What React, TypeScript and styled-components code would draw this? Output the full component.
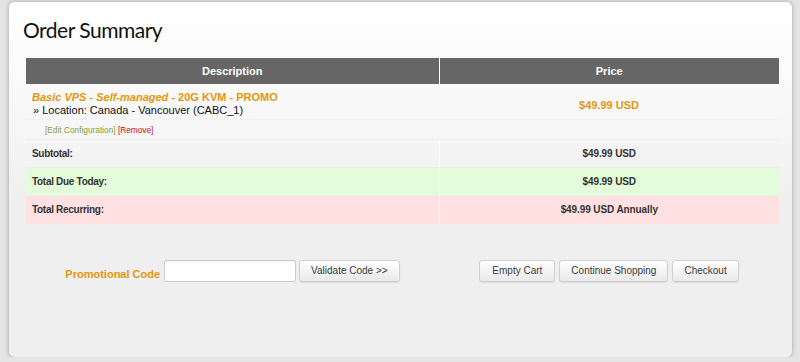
import React from "react";
import styled, { createGlobalStyle } from "styled-components";

const GlobalStyle = createGlobalStyle`
  html, body {
    margin: 0;
    padding: 0;
    background: #e4e4e4;
    font-family: "Liberation Sans", Arial, sans-serif;
  }
`;

const Panel = styled.div`
  box-sizing: border-box;
  width: 783px;
  height: 355px;
  margin: 2px 0 0 9px;
  padding: 15px 13px 0 17px;
  border-radius: 6px;
  background: linear-gradient(#ffffff 0px, #f7f7f7 120px, #efefef 200px);
  box-shadow: 0 0 5px rgba(0, 0, 0, 0.3);
`;

const Title = styled.h1`
  margin: 0 0 15px -3px;
  font-family: Lato, "Open Sans", sans-serif;
  font-weight: 400;
  font-size: 21px;
  letter-spacing: -0.5px;
  line-height: 26px;
  color: #111;
`;

const Table = styled.table`
  width: 753px;
  border-collapse: collapse;
  color: #333;
`;

const Head = styled.th<{ $split?: boolean }>`
  height: 26px;
  padding: 0;
  background: #666;
  color: #fff;
  font-size: 11px;
  font-weight: bold;
  text-align: center;
  border-left: ${(p) => (p.$split ? "1px solid #fff" : "none")};
`;

const Cell = styled.td<{ $bg?: string; $center?: boolean }>`
  box-sizing: border-box;
  padding: 0 6px;
  height: 28px;
  background: ${(p) => p.$bg || "transparent"};
  text-align: ${(p) => (p.$center ? "center" : "left")};
  font-size: 10px;
  font-weight: bold;
  letter-spacing: ${(p) => (p.$center ? "-0.1px" : "-0.3px")};
  border-left: ${(p) => (p.$center ? "1px solid rgba(255,255,255,0.6)" : "none")};
  border-top: 1px solid #ececec;
`;

const ProductCell = styled.td<{ $center?: boolean }>`
  padding: 7px 6px 2px;
  vertical-align: ${(p) => (p.$center ? "middle" : "top")};
  text-align: ${(p) => (p.$center ? "center" : "left")};
`;

const ProductName = styled.div`
  color: #e3960d;
  font-size: 11px;
  font-weight: bold;
  line-height: 13px;
  em {
    font-style: italic;
  }
`;

const Location = styled.div`
  color: #111;
  font-size: 11px;
  line-height: 13px;
  padding-left: 1px;
`;

const LinksCell = styled.td`
  height: 18px;
  padding: 1px 0 0 19px;
  font-size: 8.3px;
  border-top: 1px solid #f3f3f3;
`;

const EditLink = styled.span`
  color: #8aa12f;
`;

const RemoveLink = styled.span`
  color: #cc1111;
`;

const Price = styled.span`
  color: #e3960d;
  font-size: 11px;
  font-weight: bold;
`;

const Footer = styled.div`
  display: grid;
  grid-template-columns: 413px 340px;
  margin-top: 36px;
`;

const Group = styled.div`
  display: flex;
  align-items: center;
  justify-content: center;
  gap: 4px;
`;

const PromoLabel = styled.span`
  color: #e3960d;
  font-size: 11px;
  font-weight: bold;
  margin-top: 6px;
`;

const Input = styled.input`
  box-sizing: border-box;
  width: 132px;
  height: 22px;
  margin-right: -1px;
  border: 1px solid #ccc;
  border-radius: 2px;
  background: #fff;
  box-shadow: inset 0 1px 1px rgba(0, 0, 0, 0.05);
`;

const Button = styled.button<{ $wide?: boolean }>`
  box-sizing: border-box;
  height: 22px;
  padding: 0 ${(p) => (p.$wide ? 12 : 11)}px;
  border: 1px solid #d0d0d0;
  border-radius: 3px;
  background: linear-gradient(#ffffff, #e9e9e9);
  box-shadow: 0 1px 1px rgba(0, 0, 0, 0.08);
  font-family: "Liberation Sans", Arial, sans-serif;
  font-size: 10px;
  color: #3a3a3a;
`;

export default function App() {
  return (
    <>
      <GlobalStyle />
      <Panel>
        <Title>Order Summary</Title>
        <Table>
          <colgroup>
            <col style={{ width: 413 }} />
            <col style={{ width: 340 }} />
          </colgroup>
          <thead>
            <tr>
              <Head>Description</Head>
              <Head $split>Price</Head>
            </tr>
          </thead>
          <tbody>
            <tr>
              <ProductCell>
                <ProductName>
                  <em>Basic VPS - Self-managed</em> - 20G KVM - PROMO
                </ProductName>
                <Location>» Location: Canada - Vancouver (CABC_1)</Location>
              </ProductCell>
              <ProductCell $center>
                <Price>$49.99 USD</Price>
              </ProductCell>
            </tr>
            <tr>
              <LinksCell colSpan={2}>
                <EditLink>[Edit Configuration]</EditLink> <RemoveLink>[Remove]</RemoveLink>
              </LinksCell>
            </tr>
            <tr>
              <Cell>Subtotal:</Cell>
              <Cell $center>$49.99 USD</Cell>
            </tr>
            <tr>
              <Cell $bg="#e3fcd9">Total Due Today:</Cell>
              <Cell $bg="#e3fcd9" $center>$49.99 USD</Cell>
            </tr>
            <tr>
              <Cell $bg="#ffe1e1">Total Recurring:</Cell>
              <Cell $bg="#ffe1e1" $center>$49.99 USD Annually</Cell>
            </tr>
          </tbody>
        </Table>
        <Footer>
          <Group>
            <PromoLabel>Promotional Code</PromoLabel>
            <Input type="text" />
            <Button>Validate Code &gt;&gt;</Button>
          </Group>
          <Group>
            <Button $wide>Empty Cart</Button>
            <Button>Continue Shopping</Button>
            <Button>Checkout</Button>
          </Group>
        </Footer>
      </Panel>
    </>
  );
}
